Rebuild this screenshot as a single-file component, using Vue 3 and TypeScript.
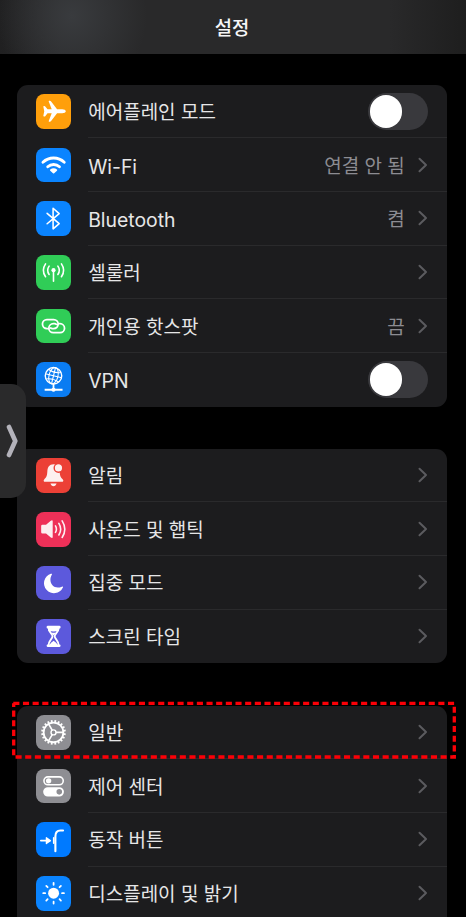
<script setup lang="ts">
type IconName =
  | 'plane' | 'wifi' | 'bluetooth' | 'cellular' | 'hotspot' | 'vpn'
  | 'bell' | 'sound' | 'moon' | 'hourglass'
  | 'gear' | 'control' | 'action' | 'sun'

interface Row {
  label: string
  icon: IconName
  tone: string
  value?: string
  toggle?: boolean
  latin?: boolean
}

const groups: Row[][] = [
  [
    { label: '에어플레인 모드', icon: 'plane', tone: 'orange', toggle: true },
    { label: 'Wi-Fi', icon: 'wifi', tone: 'blue', value: '연결 안 됨', latin: true },
    { label: 'Bluetooth', icon: 'bluetooth', tone: 'blue', value: '켬', latin: true },
    { label: '셀룰러', icon: 'cellular', tone: 'green' },
    { label: '개인용 핫스팟', icon: 'hotspot', tone: 'green', value: '끔' },
    { label: 'VPN', icon: 'vpn', tone: 'azure', toggle: true, latin: true },
  ],
  [
    { label: '알림', icon: 'bell', tone: 'red' },
    { label: '사운드 및 햅틱', icon: 'sound', tone: 'pink' },
    { label: '집중 모드', icon: 'moon', tone: 'indigo' },
    { label: '스크린 타임', icon: 'hourglass', tone: 'indigo' },
  ],
  [
    { label: '일반', icon: 'gear', tone: 'gray' },
    { label: '제어 센터', icon: 'control', tone: 'gray' },
    { label: '동작 버튼', icon: 'action', tone: 'deep' },
    { label: '디스플레이 및 밝기', icon: 'sun', tone: 'blue' },
  ],
]

const teeth = Array.from({ length: 20 }, (_, i) => i * 18 + 9)
const rays = Array.from({ length: 8 }, (_, i) => i * 45)
</script>

<template>
  <div class="screen">
    <header class="bar"><h1>설정</h1></header>

    <main class="list">
      <section v-for="(group, g) in groups" :key="g" class="card">
        <div v-for="row in group" :key="row.label" class="row">
          <span class="tile" :class="row.tone">
            <svg class="glyph" viewBox="0 0 35 35">
              <path
                v-if="row.icon === 'plane'"
                class="solid"
                d="M30 17.4c0-1.3-1.8-2-3.6-2h-5.2L15 7.4q-.4-.5-1-.5h-.8q-.6 0-.4.7l3 7.8h-4.2l-2.3-2.9q-.3-.4-.8-.4H8q-.7 0-.6.7l.9 4.6-.9 4.6q-.1.7.6.7h.5q.5 0 .8-.4l2.3-2.9h4.2l-3 7.8q-.2.7.4.7h.8q.6 0 1-.5l6.2-8h5.2c1.8 0 3.6-.7 3.6-2z"
              />
              <g v-else-if="row.icon === 'wifi'">
                <path class="line w29" d="M7 14.3A15.5 15.5 0 0 1 28.4 14.3M11.8 18.9A8.6 8.6 0 0 1 23.6 18.9" />
                <path class="solid" d="M14.3 21.7Q17.7 18.8 21.1 21.7Q21.7 22.2 21.1 22.8L18.3 25.4Q17.7 25.9 17.1 25.4L14.3 22.8Q13.7 22.2 14.3 21.7z" />
              </g>
              <path v-else-if="row.icon === 'bluetooth'" class="line w16 round" d="M11.2 12.4L23.3 22.7L17.2 28V7.3L23.3 12.6L11.2 22.9" />
              <g v-else-if="row.icon === 'cellular'">
                <path class="line w16 round" d="M9.6 8.9a11.5 11.5 0 0 0 0 13M13.2 11.2a7.3 7.3 0 0 0 0 8.4M25.6 8.9a11.5 11.5 0 0 1 0 13M22 11.2a7.3 7.3 0 0 1 0 8.4M17.6 15.4V26.4" />
                <circle class="solid" cx="17.6" cy="15.3" r="2.1" />
              </g>
              <path
                v-else-if="row.icon === 'hotspot'"
                class="line w18 round"
                d="M11.600 19.700h-.6a4.500 4.500 0 0 1 0-9h6.800a4.500 4.500 0 0 1 0 9h-1.400q-1 0-1.700-.6M23.600 14.800h.6a4.500 4.500 0 0 1 0 9h-6.800a4.500 4.500 0 0 1 0-9h1.400q1 0 1.700.6"
              />
              <g v-else-if="row.icon === 'vpn'">
                <g transform="rotate(14 17.600 13.800)">
                  <path class="line w12" d="M17.600 5.200v17.200M9.200 13.800h16.800M11 8.800q6.600 2.800 13.200 0M11 18.800q6.600-2.800 13.200 0" />
                  <ellipse class="line w12" cx="17.600" cy="13.800" rx="4.500" ry="8.400" />
                </g>
                <circle class="line w14" cx="17.600" cy="13.800" r="8.300" />
                <path class="line w18" d="M17.600 22v6M8.700 27.900h18" />
                <circle class="solid" cx="17.600" cy="27.900" r="2.100" />
              </g>
              <g v-else-if="row.icon === 'bell'" class="dim">
                <path class="solid" d="M17.600 6.400c-4.200 0-6 3.100-6.200 7.200-.2 4.600-1.200 6-3 7.700-1.300 1.300-.7 2.700.8 2.700h16.800c1.500 0 2.100-1.400.8-2.700-1.800-1.700-2.800-3.100-3-7.700-.2-4.100-2-7.200-6.200-7.200zM14.500 25.700h6.200c-.5 1.700-1.700 2.600-3.100 2.600s-2.600-.9-3.100-2.600z" />
                <circle class="badge" cx="22.600" cy="10" r="4.300" />
              </g>
              <g v-else-if="row.icon === 'sound'" class="dim">
                <path class="solid" d="M6.500 12.900h3.600l4.800-4.100q1.900-1.200 1.900.6v15.700q0 1.800-1.900.6l-4.800-4.100H6.500q-1.300 0-1.300-1.200v-6.300q0-1.200 1.300-1.200z" />
                <path class="line w16 round" d="M19.600 14a6.500 6.500 0 0 1 0 6.500M23 11.400a11 11 0 0 1 0 11.700M26.300 8.900a15.500 15.500 0 0 1 0 16.700" />
              </g>
              <path v-else-if="row.icon === 'moon'" class="solid" d="M15.900 8.700c.5-.8-.1-1.200-.9-.9A10 10 0 1 0 27.100 21.600c.3-.8-.2-1.300-1.100-.8C17.500 24.300 11.700 16.300 15.900 8.700z" />
              <g v-else-if="row.icon === 'hourglass'">
                <path class="line w18" d="M12.500 8C12.500 13.800 16.600 14.600 16.600 17.400S12.500 21.500 12.500 27M22.900 8C22.900 13.800 18.800 14.600 18.800 17.400S22.900 21.500 22.900 27" />
                <path class="solid" d="M12 6.700h11.400q1.300 0 1.300 1.200v.6q0 .9-1 .9l-.9 2.700q-5.100.9-10.200 0l-.9-2.700q-1 0-1-.9v-.6q0-1.200 1.300-1.200zM12 28.100h11.400q1.300 0 1.300-1.200v-.3q0-.9-1-.9H21.500q-.9-2.100-3.200-3.300l-.6-.4-.6.4q-2.300 1.200-3.200 3.300h-2.200q-1 0-1 .9v.3q0 1.200 1.300 1.200zM15.400 13.900h4.600l-2.300 2.700z" />
              </g>
              <g v-else-if="row.icon === 'gear'">
                <circle class="line w18" cx="17.600" cy="17.500" r="9.900" />
                <circle class="line w14" cx="17.600" cy="17.500" r="2.500" />
                <path class="line w16" d="M20.100 17.500h7.200M16.350 15.330l-3.600-6.200M16.350 19.670l-3.600 6.200" />
                <path v-for="a in teeth" :key="a" class="line w18" d="M27.800 17.500h2.200" :transform="`rotate(${a} 17.600 17.500)`" />
              </g>
              <g v-else-if="row.icon === 'control'">
                <rect class="line w16" x="8" y="7.900" width="19.400" height="8" rx="4" />
                <circle class="solid" cx="12.700" cy="11.900" r="2.700" />
                <path class="solid evenodd" d="M11.900 18.300h11.500a4.700 4.700 0 0 1 0 9.400H11.900a4.700 4.700 0 0 1 0-9.400zM23.400 20.200a2.800 2.800 0 1 0 0 5.600 2.800 2.800 0 1 0 0-5.600z" />
              </g>
              <g v-else-if="row.icon === 'action'">
                <path class="line w18 round" d="M4.900 18.700h6" />
                <path class="solid" d="M9.800 15.800q0-1.100 1-.5l4 2.700q.9.700 0 1.400l-4 2.700q-1 .6-1-.5z" />
                <path class="line w22 round" d="M19.500 29.500V14.500c0-4 1.700-5.900 5-5.900h2.700" />
                <path class="line w16 round" d="M17.800 16v5.400" />
              </g>
              <g v-else>
                <circle class="solid" cx="17.700" cy="17.300" r="5.500" />
                <path v-for="a in rays" :key="a" class="line w18 round" d="M26.200 17.300h1.900" :transform="`rotate(${a} 17.700 17.300)`" />
              </g>
            </svg>
          </span>
          <div class="content">
            <span class="label" :class="{ latin: row.latin }">{{ row.label }}</span>
            <span v-if="row.toggle" class="switch"><i class="knob"></i></span>
            <template v-else>
              <span v-if="row.value" class="value">{{ row.value }}</span>
              <svg class="chevron" viewBox="0 0 10 16"><path d="M1.500 1.700L8 8L1.500 14.300" /></svg>
            </template>
          </div>
        </div>
      </section>
    </main>

    <aside class="drawer">
      <svg class="drawer-arrow" viewBox="0 0 12 34"><path d="M3 3L9.300 17L3 31" /></svg>
    </aside>

    <svg class="marker" viewBox="0 0 466 917">
      <path d="M13.300 703.300H454.300V757H13.700V703.300" />
    </svg>
  </div>
</template>

<style>
body {
  background: #000;
  overflow: hidden;
}
</style>

<style scoped>
.screen {
  position: relative;
  width: 466px;
  height: 917px;
  overflow: hidden;
  background: #000;
  color: #e6e6e7;
  font-family: Inter, "Noto Sans CJK KR", sans-serif;
}
.bar {
  height: 54px;
  box-sizing: border-box;
  padding: 3px 2px 0 0;
  display: flex;
  align-items: center;
  justify-content: center;
  background:
    radial-gradient(ellipse 75px 80px at 72px 16px, #393b3e 0%, rgba(57, 59, 62, 0) 100%),
    linear-gradient(90deg, #202021 0, #29292a 60px, #29292a 390px, #1e1e1e 466px);
}
h1 {
  margin: 0;
  font-size: 18.800px;
  font-weight: 500;
  line-height: 28px;
  color: #f6f6f7;
}
.list {
  padding: 30.500px 18.700px 0 16.800px;
  display: flex;
  flex-direction: column;
  gap: 42.100px;
}
.card {
  border-radius: 11px;
  background: #1c1c1e;
  overflow: hidden;
}
.card:last-child {
  padding-bottom: 30px;
}
.row {
  height: 53.700px;
  padding-left: 19px;
  display: flex;
  align-items: center;
  gap: 17.600px;
}
.tile {
  flex: none;
  width: 34.800px;
  height: 34.800px;
  border-radius: 8px;
}
.glyph {
  display: block;
  width: 100%;
  height: 100%;
}
.orange { background: #ff9f0b; }
.blue { background: #0a84ff; }
.azure { background: #0a7cf2; }
.deep { background: #007aff; }
.green { background: #30cd57; }
.red { background: #ec4036; }
.pink { background: #ee3058; }
.indigo { background: #5c59dc; }
.gray { background: #8e8e93; }
.solid { fill: #fff; }
.evenodd { fill-rule: evenodd; }
.line { fill: none; stroke: #fff; }
.round { stroke-linecap: round; stroke-linejoin: round; }
.w12 { stroke-width: 1.100; }
.w14 { stroke-width: 1.400; }
.w16 { stroke-width: 1.600; }
.w18 { stroke-width: 1.800; }
.w22 { stroke-width: 2.100; }
.w29 { stroke-width: 2.900; stroke-linecap: round; }
.dim { opacity: 0.920; }
.badge { fill: #fff; stroke: #ec4036; stroke-width: 1.400; }
.content {
  flex: 1;
  height: 100%;
  box-sizing: border-box;
  padding-right: 19.500px;
  display: flex;
  align-items: center;
  border-bottom: 1px solid #2a2a2c;
}
.row:last-child .content { border-bottom-color: transparent; }
.label {
  flex: 1;
  padding-top: 4px;
  font-size: 19px;
  line-height: 28px;
  white-space: nowrap;
}
.latin {
  padding-top: 4px;
  font-size: 19.400px;
}
.value {
  margin-right: 13px;
  padding-top: 4px;
  font-size: 19px;
  line-height: 28px;
  color: #8c8c92;
}
.chevron {
  width: 10px;
  height: 16px;
}
.chevron path {
  fill: none;
  stroke: #5b5b5f;
  stroke-width: 2;
  stroke-linecap: round;
  stroke-linejoin: round;
}
.switch {
  width: 60px;
  height: 37px;
  margin: 1px -0.500px 0 0;
  box-sizing: border-box;
  padding: 2.200px 1.500px;
  border-radius: 19px;
  background: #39393d;
}
.knob {
  display: block;
  width: 32.600px;
  height: 32.600px;
  border-radius: 50%;
  background: #fff;
}
.drawer {
  position: absolute;
  left: 0;
  top: 383.500px;
  width: 26px;
  height: 114px;
  border-radius: 0 15px 15px 0;
  background: #2a2a2b;
  display: flex;
  align-items: center;
  padding-left: 5.500px;
  box-sizing: border-box;
}
.drawer-arrow {
  width: 12px;
  height: 34px;
}
.drawer-arrow path {
  fill: none;
  stroke: #b3b2ba;
  stroke-width: 4.600;
  stroke-linecap: round;
  stroke-linejoin: round;
}
.marker {
  position: absolute;
  left: 0;
  top: 0;
  width: 466px;
  height: 917px;
}
.marker path {
  fill: none;
  stroke: #fb0007;
  stroke-width: 3.300;
  stroke-dasharray: 6.100 3.560;
}
</style>
